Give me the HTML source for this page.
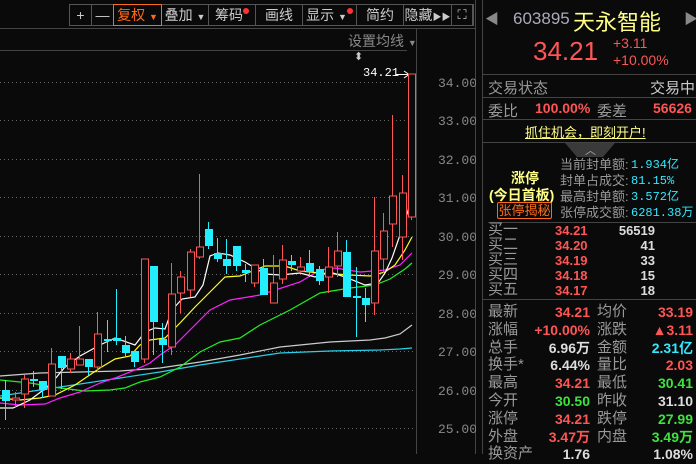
<!DOCTYPE html>
<html><head><meta charset="utf-8"><style>
*{margin:0;padding:0;box-sizing:border-box}
body{width:696px;height:454px;background:#0a0a0a;overflow:hidden;position:relative;font-family:"Liberation Sans","Noto Sans CJK SC",sans-serif;color:#bbb}
.a{position:absolute;white-space:nowrap}
.tb{position:absolute;top:4px;height:22px;border:1px solid #555;border-left:none;color:#ccc;font-size:14px;line-height:20px;text-align:center}
.dot{display:inline-block;width:6px;height:6px;border-radius:3px;background:#f33;vertical-align:top;margin-top:3px}
.r{color:#ff5555}.g{color:#3ee23e}.c{color:#33e8ff}.w{color:#ddd}.l{color:#999}
</style></head><body>
<div class="a" style="left:69px;top:4px;width:405px;height:22px;border:1px solid #555"></div>
<div class="tb" style="left:70px;width:22px">+</div>
<div class="tb" style="left:92px;width:22px">—</div>
<div class="tb" style="left:113px;width:49px;border:1px solid #ff6a1a;color:#ff6a1a">复权 <span style="font-size:9px">▼</span></div>
<div class="tb" style="left:162px;width:47px">叠加 <span style="font-size:9px">▼</span></div>
<div class="tb" style="left:209px;width:47px">筹码<span class="dot"></span></div>
<div class="tb" style="left:256px;width:47px">画线</div>
<div class="tb" style="left:303px;width:54px">显示 <span style="font-size:9px">▼</span><span class="dot"></span></div>
<div class="tb" style="left:357px;width:47px">简约</div>
<div class="tb" style="left:404px;width:48px">隐藏<span style="font-size:9px">▶▶</span></div>
<div class="tb" style="left:452px;width:21px;font-size:13px">⛶</div>
<div class="a" style="left:0;top:28px;width:476px;height:1px;background:#444"></div>
<div class="a" style="left:0;top:50px;width:407px;height:1px;background:#444"></div>
<div class="a" style="left:416px;top:28px;width:1px;height:426px;background:#444"></div>
<div class="a" style="left:475px;top:0;width:1px;height:454px;background:#444"></div>
<div class="a" style="left:482px;top:0;width:1px;height:454px;background:#444"></div>
<div class="a" style="left:348px;top:31px;font-size:14px;color:#888">设置均线 <span style="font-size:9px">▼</span></div>
<div class="a" style="left:354px;top:50px;font-size:11px;color:#ccc">⬍</div>
<div class="a" style="left:363px;top:66px;font-size:12px;color:#fff;font-family:'Liberation Mono',monospace">34.21</div>
<svg class="a" style="left:0;top:0" width="476" height="454">
<g stroke="#fff" stroke-width="1" fill="none"><line x1="396" y1="74.5" x2="409" y2="74.5"/><polyline points="404,71 409,74.5 404,78"/></g>
<g stroke="#666" stroke-dasharray="1,3" stroke-width="1">
<line x1="0" y1="82.5" x2="415" y2="82.5"/><line x1="0" y1="120.5" x2="415" y2="120.5"/><line x1="0" y1="159.5" x2="415" y2="159.5"/><line x1="0" y1="197.5" x2="415" y2="197.5"/><line x1="0" y1="236.5" x2="415" y2="236.5"/><line x1="0" y1="274.5" x2="415" y2="274.5"/><line x1="0" y1="313.5" x2="415" y2="313.5"/><line x1="0" y1="351.5" x2="415" y2="351.5"/><line x1="0" y1="390.5" x2="415" y2="390.5"/><line x1="0" y1="428.5" x2="415" y2="428.5"/>
</g>
<g font-family="Liberation Mono,monospace" font-size="13" fill="#888">
<text x="438" y="87">34.00</text><text x="438" y="125">33.00</text><text x="438" y="164">32.00</text><text x="438" y="202">31.00</text><text x="438" y="241">30.00</text><text x="438" y="279">29.00</text><text x="438" y="318">28.00</text><text x="438" y="356">27.00</text><text x="438" y="395">26.00</text><text x="438" y="433">25.00</text>
</g>
<g fill="none" stroke-width="1.2">
<polyline stroke="#ccc" points="0,376 40,373 80,372 120,371 160,368 200,362 240,355 280,347 330,342 370,340 385,338 400,334 412,325"/>
<polyline stroke="#2ad0ea" points="0,396 40,390 80,384 120,378 160,372 200,365 240,359 280,353 330,351 380,350 400,349 412,348"/>
<polyline stroke="#22ee22" points="0,380 30,383 60,388 85,391 110,390 125,388 140,382 160,377 180,367 200,352 220,342 240,338 260,325 290,310 320,293 350,288 375,285 390,279 405,269 412,263"/>
<polyline stroke="#ff22ff" points="0,403 20,405 45,404 60,398 80,392 100,383 115,378 135,370 150,363 160,355 175,345 190,330 210,310 230,300 260,295 300,282 320,270 335,268 360,272 385,270 400,265 412,253"/>
<polyline stroke="#ffff22" points="0,398 20,400 40,398 55,395 75,385 100,368 115,359 130,356 140,345 150,340 165,338 180,323 195,307 210,292 225,277 240,276 255,270 265,266 285,266 300,271 320,273 350,275 370,276 385,272 395,265 405,250 412,237"/>
<polyline stroke="#fff" points="0,408 13,408 30,400 50,385 65,367 80,356 100,345 115,338 135,345 145,332 155,328 165,329 172,310 182,299 195,297 203,285 210,256 218,253 230,255 245,262 255,268 265,274 280,275 300,273 315,277 330,272 345,277 365,285 378,283 385,273 392,258 400,235 408,211 412,190"/>
</g>
<g id="c"></g>
</svg>
<script>
var d=[
[2,'c',380,420,390,401],[12,'r',392,408,398,400],[21,'r',375,408,379,394],[30,'c',371,387,379,381],[39,'c',381,398,381,390],
[48,'r',348,396,364,396],[58,'c',356,389,356,368],[67,'r',353,373,359,369],[76,'r',326,365,359,365],[85,'c',359,375,359,367],
[94,'r',312,372,334,367],[104,'c',320,352,339,341],[113,'c',289,345,338,341],[122,'c',336,357,345,353],[131,'c',351,367,351,362],
[141,'r',259,363,259,359],[150,'c',266,355,266,322],[159,'c',323,363,339,345],[168,'r',263,355,294,347],[177,'r',271,313,277,293],
[187,'r',249,297,252,290],[196,'r',174,259,247,257],[205,'c',222,249,229,246],[214,'c',238,262,253,259],[223,'c',239,274,259,266],
[233,'c',246,271,246,266],[242,'c',264,282,270,273],[251,'r',265,287,265,283],[260,'c',259,295,268,295],[270,'r',255,303,283,303],
[279,'r',245,284,260,279],[288,'c',255,271,261,265],[297,'r',257,273,267,271],[306,'c',250,277,263,272],[316,'c',266,285,269,281],
[325,'r',247,293,267,277],[334,'r',232,277,251,266],[343,'c',240,297,252,297],[353,'c',267,337,296,298],[362,'c',288,322,298,305],
[371,'r',197,315,251,303],[380,'r',213,273,231,259],[389,'r',115,247,196,224],[399,'r',175,260,193,237],[408,'r',74,220,74,217]];
var s='';d.forEach(function(k){var x=k[0],col=k[1]=='r'?'#ff5555':'#22eeff',m=x+3.5;
s+='<line x1="'+m+'" y1="'+k[2]+'" x2="'+m+'" y2="'+k[3]+'" stroke="'+col+'"/>';
var h=Math.max(1.5,k[5]-k[4]);
if(k[1]=='r')s+='<rect x="'+(x+0.5)+'" y="'+k[4]+'" width="7" height="'+h+'" fill="#0a0a0a" stroke="'+col+'"/>';
else s+='<rect x="'+x+'" y="'+k[4]+'" width="8" height="'+h+'" fill="'+col+'"/>';});
document.getElementById('c').innerHTML=s;
</script>
<div class="a" style="left:485px;top:9px;color:#888;font-size:14px">◀</div>
<div class="a" style="left:684px;top:9px;color:#888;font-size:14px">▶</div>
<div class="a" style="left:513px;top:9px;font-size:17px;color:#aab">603895</div>
<div class="a" style="left:573px;top:5px;font-size:22px;color:#ffff88">天永智能</div>
<div class="a r" style="left:533px;top:36px;font-size:26px">34.21</div>
<div class="a r" style="left:613px;top:35px;font-size:14px">+3.11</div>
<div class="a r" style="left:613px;top:52px;font-size:14px">+10.00%</div>
<div class="a" style="left:483px;top:74px;width:213px;height:1px;background:#444"></div>
<div class="a l" style="left:488px;top:77px;font-size:15px">交易状态</div>
<div class="a w" style="left:650px;top:77px;font-size:15px;color:#ccc">交易中</div>
<div class="a" style="left:483px;top:97px;width:213px;height:1px;background:#444"></div>
<div class="a l" style="left:488px;top:100px;font-size:15px">委比</div>
<div class="a r" style="left:535px;top:100px;font-size:14px;font-weight:bold">100.00%</div>
<div class="a l" style="left:597px;top:100px;font-size:15px">委差</div>
<div class="a r" style="left:653px;top:100px;font-size:14px;font-weight:bold">56626</div>
<div class="a" style="left:483px;top:119px;width:213px;height:1px;background:#444"></div>
<div class="a" style="left:525px;top:122px;font-size:13px;color:#ffff88;text-decoration:underline">抓住机会，即刻开户!</div>
<div class="a" style="left:483px;top:142px;width:213px;height:1px;background:#444"></div>
<div class="a" style="left:565px;top:143px;border-left:12px solid transparent;border-right:12px solid transparent;border-top:14px solid #3a3a3a;width:50px"></div>
<div class="a" style="left:585px;top:142px;font-size:11px;color:#aaa">︿</div>
<div class="a" style="left:511px;top:168px;font-size:14px;color:#ffff88;font-weight:bold">涨停</div>
<div class="a" style="left:489px;top:185px;font-size:14px;color:#ffff88;font-weight:bold">(今日首板)</div>
<div class="a" style="left:497px;top:202px;width:55px;height:17px;border:1px solid #ff6a1a;border-radius:2px;color:#ff6a1a;font-size:13px;line-height:15px;text-align:center">张停揭秘</div>
<div class="a l" style="left:560px;top:157px;font-size:13px;line-height:16px">当前封单额:<br>封单占成交:<br>最高封单额:<br>张停成交额:</div>
<div class="a c" style="left:631px;top:157px;font-size:12px;line-height:16px;font-family:'Liberation Mono','Noto Sans CJK SC',monospace">1.934亿<br>81.15%<br>3.572亿<br>6281.38万</div>
<div class="a" style="left:488px;top:222px;width:208px;height:1px;background:#444"></div>
<div class="a l" style="left:488px;top:222px;font-size:15px;line-height:15px">买一<br>买二<br>买三<br>买四<br>买五</div>
<div class="a r" style="left:555px;top:223px;font-size:13px;line-height:15px;font-weight:bold">34.21<br>34.20<br>34.19<br>34.18<br>34.17</div>
<div class="a w" style="left:600px;top:223px;width:55px;text-align:right;font-size:13px;line-height:15px;font-weight:bold">56519<br>41<br>33<br>15<br>18</div>
<div class="a" style="left:483px;top:299px;width:213px;height:1px;background:#444"></div>
<div class="a l" style="left:488px;top:303px;font-size:15px;line-height:17.8px">最新<br>涨幅<br>总手<br>换手*<br>最高<br>今开<br>涨停<br>外盘<br>换资产</div>
<div class="a l" style="left:597px;top:303px;font-size:15px;line-height:17.8px">均价<br>涨跌<br>金额<br>量比<br>最低<br>昨收<br>跌停<br>内盘</div>
<div class="a" style="left:520px;top:304px;width:70px;text-align:right;font-size:14px;line-height:17.8px;font-weight:bold"><span class="r">34.21</span><br><span class="r">+10.00%</span><br><span class="w">6.96万</span><br><span class="w">6.44%</span><br><span class="r">34.21</span><br><span class="g">30.50</span><br><span class="r">34.21</span><br><span class="r">3.47万</span><br><span class="w">1.76</span></div>
<div class="a" style="left:620px;top:304px;width:73px;text-align:right;font-size:14px;line-height:17.8px;font-weight:bold"><span class="r">33.19</span><br><span class="r">▲3.11</span><br><span class="c">2.31亿</span><br><span class="r">2.03</span><br><span class="g">30.41</span><br><span class="w">31.10</span><br><span class="g">27.99</span><br><span class="g">3.49万</span><br><span class="w">1.08%</span></div>
</body></html>
